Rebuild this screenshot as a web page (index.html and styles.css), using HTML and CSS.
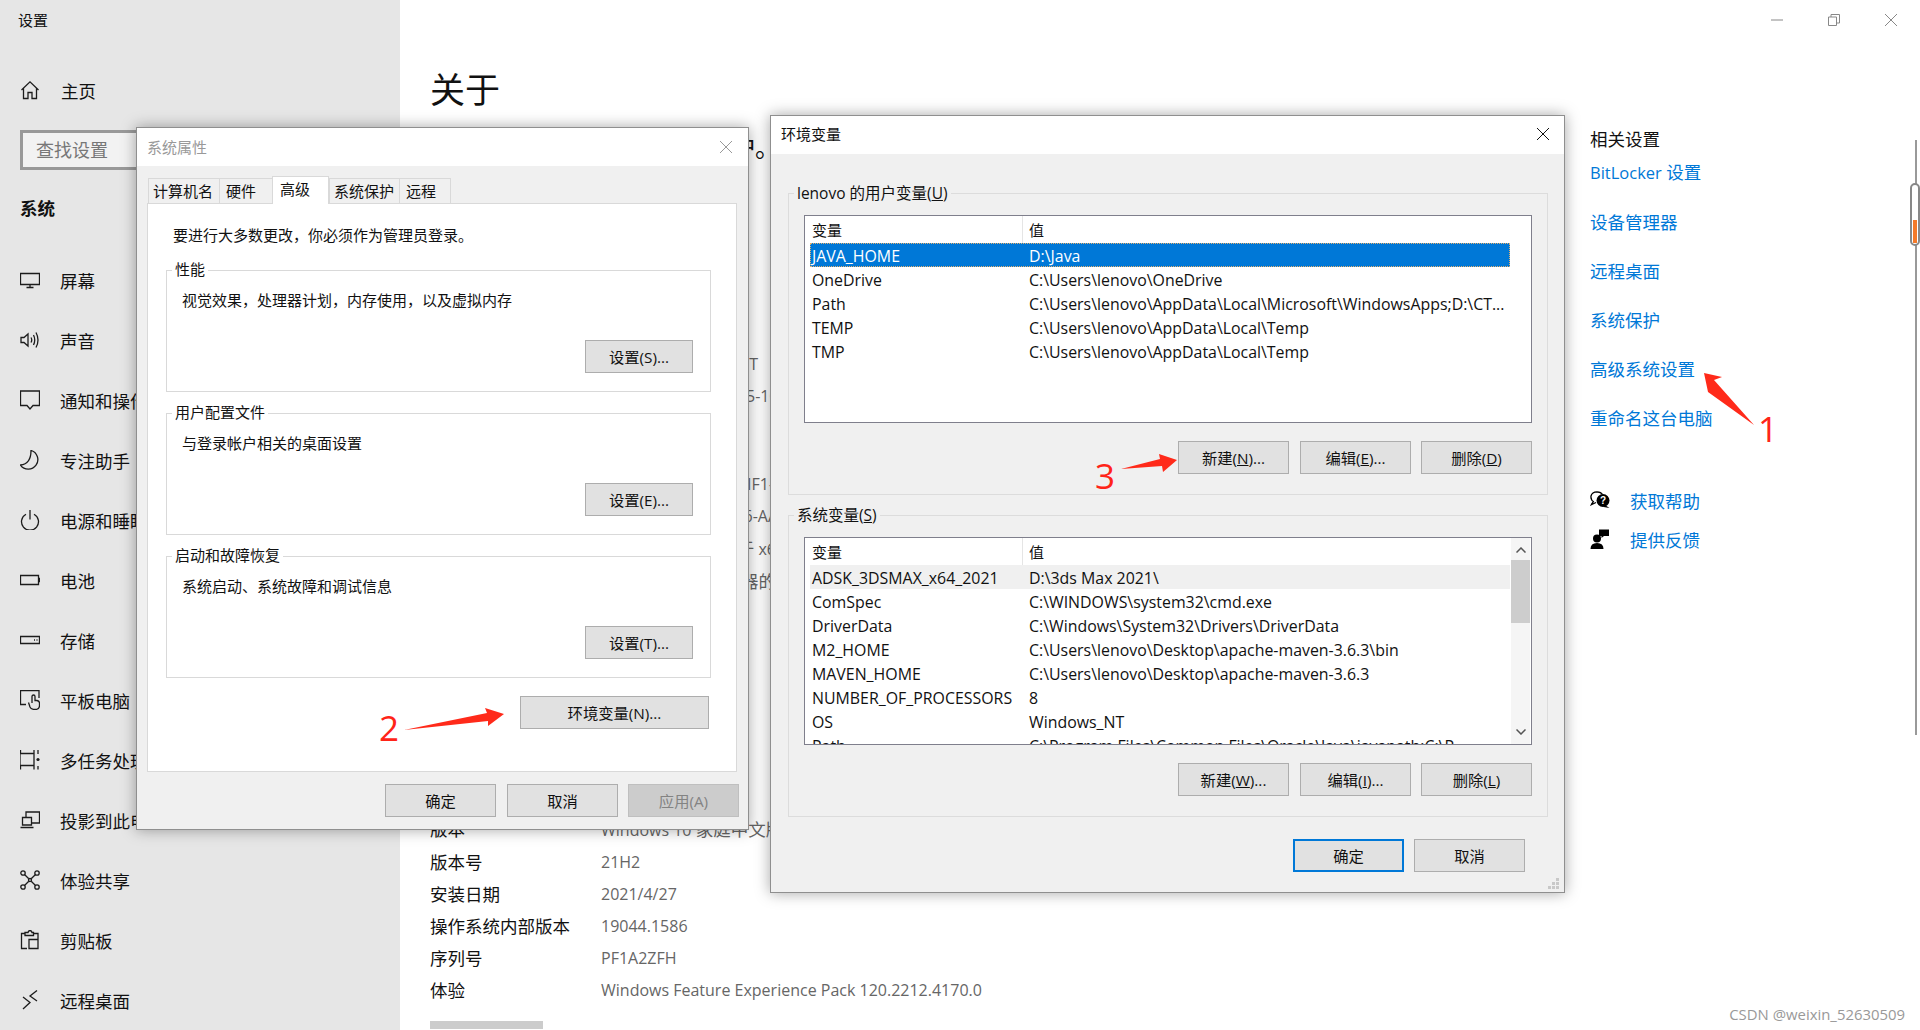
FILE: index.html
```html
<!DOCTYPE html>
<html lang="zh-CN">
<head>
<meta charset="utf-8">
<title>设置</title>
<link rel="stylesheet" href="styles.css">
</head>
<body>
<div class="settings">
  <aside class="sidebar">
    <div class="app-title">设置</div>
    <div class="nav-item home">
      <svg class="ico" viewBox="0 0 20 20"><path d="M1.5 10 10 1.8 18.500 10M3.500 8.200V18.500H8V12.500H12V18.500H16.500V8.200"/></svg>
      <span>主页</span>
    </div>
    <div class="search">查找设置</div>
    <div class="section">系统</div>
    <nav class="nav">
      <div class="nav-item"><svg class="ico" viewBox="0 0 20 20"><path d="M.5 3.500H19.500V14.500H.5ZM10 14.500V17.500M6.500 17.500H13.500"/></svg><span>屏幕</span></div>
      <div class="nav-item"><svg class="ico" viewBox="0 0 20 20"><path d="M1 7.500H4L8 4V16L4 12.500H1ZM11 7.500Q12.500 10 11 12.500M13.500 5Q16 10 13.500 15M16 2.500Q20 10 16 17.500"/></svg><span>声音</span></div>
      <div class="nav-item"><svg class="ico" viewBox="0 0 20 20"><path d="M.5 1H19.500V15.500H13L10 19 7 15.500H.5Z"/></svg><span>通知和操作</span></div>
      <div class="nav-item"><svg class="ico" viewBox="0 0 20 20"><path d="M11 .5A9.500 9.500 0 1 1 .5 15Q11 14 11 .5Z"/></svg><span>专注助手</span></div>
      <div class="nav-item"><svg class="ico" viewBox="0 0 20 20"><path d="M6 4.200A8.500 8.500 0 1 0 14 4.200M10 0V9.500"/></svg><span>电源和睡眠</span></div>
      <div class="nav-item"><svg class="ico" viewBox="0 0 20 20"><path d="M.5 5.500H18.500V14.500H.5ZM18.500 8.500H19.500V11.500H18.500"/></svg><span>电池</span></div>
      <div class="nav-item"><svg class="ico" viewBox="0 0 20 20"><path d="M.5 6.500H19.500V13.500H.5ZM14 10H15M16.500 10H17.500"/></svg><span>存储</span></div>
      <div class="nav-item"><svg class="ico" viewBox="0 0 20 20"><path d="M6 14.500H.5V.5H19V8M12 13V6.500Q12 5 13.500 5 15 5 15 6.500V10.500H17Q19.500 11 19.500 13V15.500Q19.500 19.500 15 19.500 11 19.500 10 17L8.500 12.500"/></svg><span>平板电脑</span></div>
      <div class="nav-item"><svg class="ico" viewBox="0 0 20 20"><path d="M.5 0V3.500H14V0M.5 19.500V15.500H14V19.500M0 15.500V3.500M14 15.500V3.500M.5 15.500H14M18 0V4M18 16V19.500"/><circle class="fill" cx="18" cy="9.500" r="1.600"/></svg><span>多任务处理</span></div>
      <div class="nav-item"><svg class="ico" viewBox="0 0 20 20"><path d="M6 7V2H19.500V13H12M2.500 7.500H11.500V15H2.500ZM.5 17.500H13.500"/></svg><span>投影到此电脑</span></div>
      <div class="nav-item"><svg class="ico" viewBox="0 0 20 20"><circle cx="3" cy="3" r="2.200"/><circle cx="17" cy="3" r="2.200"/><circle cx="3" cy="17" r="2.200"/><circle cx="17" cy="17" r="2.200"/><circle cx="10" cy="10" r="1.500"/><path d="M4.500 4.500 8.800 8.800M15.500 4.500 11.200 8.800M4.500 15.500 8.800 11.200M15.500 15.500 11.200 11.200"/></svg><span>体验共享</span></div>
      <div class="nav-item"><svg class="ico" viewBox="0 0 20 20"><path d="M7 18.500H1.500V3.500H5M13 3.500H18V18.500H9V9.500H18M5 5.500V2.500H8Q8.500 .5 10 .5 11.500 .5 12 2.500H13.500V5.500Z"/></svg><span>剪贴板</span></div>
      <div class="nav-item"><svg class="ico" viewBox="0 0 20 20"><path d="M3 7 10 12.500 3 19M17 .5 10 6 17 11"/></svg><span>远程桌面</span></div>
    </nav>
  </aside>

  <main class="main">
    <h1 class="page-title">关于</h1>
    <p class="lead">你的电脑受到监视并受到保护。</p>
    <div class="specs">
      <div class="spec"><span class="spec-k">设备名称</span><span class="spec-v">LAPTOP-K2ABBQFXIT</span></div>
      <div class="spec"><span class="spec-k">处理器</span><span class="spec-v wrap">Intel(R) Core(TM)&nbsp;&nbsp;&nbsp;&nbsp;i5-10300H CPU @ 2.50GHz 2.50 GHz</span></div>
      <div class="spec"><span class="spec-k">机带 RAM</span><span class="spec-v">16.0 GB</span></div>
      <div class="spec"><span class="spec-k">设备 ID</span><span class="spec-v">9D5C13AB-4C77-B7IF1-4E0</span></div>
      <div class="spec"><span class="spec-k">产品 ID</span><span class="spec-v">00342-30000-0000&nbsp;6-AAOEM</span></div>
      <div class="spec"><span class="spec-k">系统类型</span><span class="spec-v">64 <span class="cjk">位操作系统</span>, <span class="cjk">基于</span> x64 <span class="cjk">的处理器</span></span></div>
      <div class="spec"><span class="spec-k">笔和触控</span><span class="spec-v"><span class="cjk">没有可用于此显示器的笔或触控输入</span></span></div>
    </div>
    <div class="specs lower">
      <div class="spec"><span class="spec-k">版本</span><span class="spec-v">Windows 10 <span class="cjk">家庭中文版</span></span></div>
      <div class="spec"><span class="spec-k">版本号</span><span class="spec-v">21H2</span></div>
      <div class="spec"><span class="spec-k">安装日期</span><span class="spec-v">2021/4/27</span></div>
      <div class="spec"><span class="spec-k">操作系统内部版本</span><span class="spec-v">19044.1586</span></div>
      <div class="spec"><span class="spec-k">序列号</span><span class="spec-v">PF1A2ZFH</span></div>
      <div class="spec"><span class="spec-k">体验</span><span class="spec-v">Windows Feature Experience Pack 120.2212.4170.0</span></div>
    </div>
    <div class="copy-btn"></div>
  </main>

  <aside class="related">
    <div class="win-controls">
      <svg viewBox="0 0 12 12"><path d="M0 6H12"/></svg>
      <svg viewBox="0 0 12 12"><path d="M.5 3H8.500V11.500H.5ZM3 3V.5H11.500V9H8.500"/></svg>
      <svg viewBox="0 0 12 12"><path d="M0 0 12 12M12 0 0 12"/></svg>
    </div>
    <div class="related-title">相关设置</div>
    <a class="link first"><span class="latin">BitLocker</span> 设置</a>
    <a class="link">设备管理器</a>
    <a class="link">远程桌面</a>
    <a class="link">系统保护</a>
    <a class="link">高级系统设置</a>
    <a class="link">重命名这台电脑</a>
    <div class="help">
      <svg class="help-ico" viewBox="0 0 20 18"><path class="line" d="M4 11Q.5 9 1 5 2 .8 7 .8 11 1 12.500 3.500M3.500 10 1.500 13.500 6 11.500"/><circle cx="13" cy="9.500" r="6.500"/><path d="M15 14 19.500 17 13.500 16Z"/><text class="q" x="13" y="13" text-anchor="middle">?</text></svg>
      <a class="link-plain">获取帮助</a>
    </div>
    <div class="help second">
      <svg class="help-ico" viewBox="0 0 20 20"><circle cx="7" cy="9.500" r="4"/><path d="M.5 20Q.5 14 7 14 13.500 14 13.500 20ZM9 .5H19V7H14L11.500 9V7H9Z"/></svg>
      <a class="link-plain">提供反馈</a>
    </div>
  </aside>
</div>

<div class="outer-scroll"><div class="outer-thumb"><div class="outer-mark"></div></div></div>

<section class="dialog props">
  <header class="dlg-title muted"><span>系统属性</span>
    <svg class="dlg-x" viewBox="0 0 12 12"><path d="M0 0 12 12M12 0 0 12"/></svg></header>
  <div class="tabs">
    <div class="tab">计算机名</div>
    <div class="tab">硬件</div>
    <div class="tab active">高级</div>
    <div class="tab">系统保护</div>
    <div class="tab">远程</div>
  </div>
  <div class="tab-panel">
    <p class="note">要进行大多数更改，你必须作为管理员登录。</p>
    <div class="group">
      <div class="legend">性能</div>
      <p class="desc">视觉效果，处理器计划，内存使用，以及虚拟内存</p>
      <button class="btn">设置(S)...</button>
    </div>
    <div class="group">
      <div class="legend">用户配置文件</div>
      <p class="desc">与登录帐户相关的桌面设置</p>
      <button class="btn">设置(E)...</button>
    </div>
    <div class="group">
      <div class="legend">启动和故障恢复</div>
      <p class="desc">系统启动、系统故障和调试信息</p>
      <button class="btn">设置(T)...</button>
    </div>
    <button class="btn env">环境变量(N)...</button>
  </div>
  <footer class="dlg-actions">
    <button class="btn">确定</button>
    <button class="btn">取消</button>
    <button class="btn disabled">应用(A)</button>
  </footer>
</section>

<section class="dialog envvars">
  <header class="dlg-title raised"><span>环境变量</span>
    <svg class="dlg-x dark" viewBox="0 0 12 12"><path d="M0 0 12 12M12 0 0 12"/></svg></header>
  <div class="ev-body">
    <div class="ev-group">
      <div class="ev-legend">lenovo 的用户变量(<u>U</u>)</div>
      <div class="listview">
        <div class="lv-main">
          <div class="lv-head"><span class="c1">变量</span><span class="c2">值</span></div>
          <div class="lv-row selected"><span class="c1">JAVA_HOME</span><span class="c2">D:\Java</span></div>
          <div class="lv-row"><span class="c1">OneDrive</span><span class="c2">C:\Users\lenovo\OneDrive</span></div>
          <div class="lv-row"><span class="c1">Path</span><span class="c2">C:\Users\lenovo\AppData\Local\Microsoft\WindowsApps;D:\CT...</span></div>
          <div class="lv-row"><span class="c1">TEMP</span><span class="c2">C:\Users\lenovo\AppData\Local\Temp</span></div>
          <div class="lv-row"><span class="c1">TMP</span><span class="c2">C:\Users\lenovo\AppData\Local\Temp</span></div>
        </div>
      </div>
      <div class="ev-buttons">
        <button class="btn">新建(<u>N</u>)...</button>
        <button class="btn">编辑(<u>E</u>)...</button>
        <button class="btn">删除(<u>D</u>)</button>
      </div>
    </div>
    <div class="ev-group">
      <div class="ev-legend">系统变量(<u>S</u>)</div>
      <div class="listview">
        <div class="lv-main">
          <div class="lv-head"><span class="c1">变量</span><span class="c2">值</span></div>
          <div class="lv-row hot"><span class="c1">ADSK_3DSMAX_x64_2021</span><span class="c2">D:\3ds Max 2021\</span></div>
          <div class="lv-row"><span class="c1">ComSpec</span><span class="c2">C:\WINDOWS\system32\cmd.exe</span></div>
          <div class="lv-row"><span class="c1">DriverData</span><span class="c2">C:\Windows\System32\Drivers\DriverData</span></div>
          <div class="lv-row"><span class="c1">M2_HOME</span><span class="c2">C:\Users\lenovo\Desktop\apache-maven-3.6.3\bin</span></div>
          <div class="lv-row"><span class="c1">MAVEN_HOME</span><span class="c2">C:\Users\lenovo\Desktop\apache-maven-3.6.3</span></div>
          <div class="lv-row"><span class="c1">NUMBER_OF_PROCESSORS</span><span class="c2">8</span></div>
          <div class="lv-row"><span class="c1">OS</span><span class="c2">Windows_NT</span></div>
          <div class="lv-row"><span class="c1">Path</span><span class="c2">C:\Program Files\Common Files\Oracle\Java\javapath;C:\P...</span></div>
        </div>
        <div class="lv-scroll">
          <svg viewBox="0 0 10 6"><path d="M.5 5.500 5 1 9.500 5.500"/></svg>
          <div class="lv-thumb"></div>
          <svg viewBox="0 0 10 6"><path d="M.5 .5 5 5 9.500 .5"/></svg>
        </div>
      </div>
      <div class="ev-buttons">
        <button class="btn">新建(<u>W</u>)...</button>
        <button class="btn">编辑(<u>I</u>)...</button>
        <button class="btn">删除(<u>L</u>)</button>
      </div>
    </div>
  </div>
  <footer class="ev-actions">
    <button class="btn primary">确定</button>
    <button class="btn">取消</button>
  </footer>
  <svg class="grip" viewBox="0 0 12 12"><path d="M8 0h3v3H8zM4 4h3v3H4zM8 4h3v3H8zM0 8h3v3H0zM4 8h3v3H4zM8 8h3v3H8z"/></svg>
</section>

<svg class="arrows" viewBox="0 0 1920 1030">
  <polygon points="1704,373 1722,377 1714,380 1754,425 1708,392"/>
  <polygon points="404,730 487,713 485,708 504,714 488,726 488,721"/>
  <polygon points="1121,469 1160,459 1159,454 1177,460 1163,472 1162,466"/>
</svg>
<span class="num n1">1</span>
<span class="num n2">2</span>
<span class="num n3">3</span>
<div class="watermark">CSDN @weixin_52630509</div>
</body>
</html>
```
FILE: styles.css
```css
* { box-sizing: border-box; }
html, body { margin: 0; height: 100%; overflow: hidden; }
body {
  width: 1920px; height: 1030px; position: relative; background: #fff; color: #111;
  font-family: "Open Sans", "Noto Sans CJK SC", sans-serif;
}
p, h1 { margin: 0; }

.settings { display: flex; height: 1030px; }

/* sidebar */
.sidebar { width: 400px; flex: none; background: #e6e6e6; padding-left: 20px; overflow: hidden; }
.app-title { font-size: 15px; line-height: 20px; margin: 10px 0 0 -2px; }
.nav-item { display: flex; align-items: center; height: 60px; gap: 20px; font-size: 17.500px; white-space: nowrap; }
.nav-item.home { height: 40px; margin-top: 40px; gap: 21px; }
.ico { width: 20px; height: 20px; flex: none; fill: none; stroke: #1c1c1c; stroke-width: 1.300; }
.ico .fill { fill: #1c1c1c; stroke: none; }
.search {
  width: 300px; height: 40px; margin-top: 20px; background: #f2f2f2; border: 3px solid #999;
  padding-left: 13px; line-height: 34px; font-size: 18px; color: #777;
}
.section { font-size: 17.500px; font-weight: 700; line-height: 24px; margin-top: 26px; }
.nav { margin-top: 30px; }

/* main */
.main { width: 1190px; flex: none; padding: 65px 0 0 30px; position: relative; overflow: hidden; }
.page-title { font-size: 35px; font-weight: 400; line-height: 50px; }
.lead { font-size: 25px; line-height: 36px; margin-top: 14px; white-space: nowrap; }
.specs { margin-top: 187px; }
.specs.lower { margin-top: 223px; }
.spec { display: flex; font-size: 17.500px; line-height: 24px; margin-bottom: 8px; }
.spec-k { width: 171px; flex: none; }
.spec-v { color: #666; white-space: nowrap; font-size: 16px; }
.spec-v.wrap { white-space: normal; width: 300px; }
.cjk { font-size: 17.500px; }
.copy-btn { width: 113px; height: 8px; background: #ccc; margin-top: 19px; }

/* related */
.related { flex: 1; position: relative; font-size: 17.500px; }
.win-controls { display: flex; height: 127px; padding: 14px 0 0 181px; gap: 45px; align-items: flex-start; }
.win-controls svg { width: 12px; height: 12px; fill: none; stroke: #888; stroke-width: 1; flex: none; }
.related-title { line-height: 24px; }
.link { display: block; color: #0078d7; line-height: 24px; margin-top: 25px; }
.link.first { margin-top: 9px; }
.latin { font-size: 16.500px; }
.help { display: flex; align-items: center; height: 24px; margin-top: 58px; gap: 20px; color: #0078d7; }
.help.second { margin-top: 15px; }
.help-ico { width: 20px; height: 20px; flex: none; fill: #000; }
.help-ico .line { fill: none; stroke: #000; stroke-width: 1.300; }
.help-ico .q { fill: #fff; font-size: 10px; font-weight: 700; font-family: "Liberation Sans", sans-serif; }

.outer-scroll { position: absolute; left: 1915px; top: 140px; width: 2px; height: 595px; background: #999; }
.outer-thumb { position: absolute; left: -5px; top: 43px; width: 10px; height: 63px; background: #fff; border: 2px solid #888; border-radius: 5px; }
.outer-mark { position: absolute; left: 1px; top: 35px; width: 4px; height: 23px; background: #f47a2a; }

/* dialogs */
.dialog {
  position: absolute; background: #f0f0f0; border: 1px solid #8f8f8f;
  box-shadow: 0 0 14px rgba(0, 0, 0, .35); font-size: 15px; display: flex; flex-direction: column;
}
.props { left: 136px; top: 127px; width: 613px; height: 703px; }
.envvars { left: 770px; top: 115px; width: 795px; height: 778px; }
.dlg-title {
  height: 38px; flex: none; background: #fff; display: flex; align-items: center; justify-content: space-between;
  padding: 0 15px 0 10px; line-height: 20px;
}
.dlg-title.raised { padding-bottom: 2px; }
.dlg-title.muted { color: #999; padding-right: 16px; }
.dlg-x { width: 12px; height: 12px; fill: none; stroke: #999; stroke-width: 1; }
.dlg-x.dark { stroke: #111; }

.tabs { display: flex; align-items: flex-end; height: 37px; padding-left: 11px; }
.tab {
  height: 25px; padding: 0 6px; line-height: 24px; border: 1px solid #d9d9d9; border-bottom: 0; border-right: 0;
  margin-top: 12px; white-space: nowrap;
}
.tab:nth-child(2) { width: 53px; }
.tab:nth-child(3) { width: 57px; }
.tab:nth-child(4) { width: 70px; padding: 0 4px; }
.tab:nth-child(5) { width: 52px; border-right: 1px solid #d9d9d9; }
.tab:first-child { width: 71px; padding: 0 4px; }
.tab.active {
  height: 28px; background: #fff; border-right: 1px solid #d9d9d9; margin-bottom: -1px; padding: 0 7px;
  line-height: 24px; position: relative;
}
.tab-panel {
  margin: 0 11px 0 10px; height: 569px; background: #fff; border: 1px solid #d9d9d9; padding: 0 0 0 18px;
  display: flex; flex-direction: column; flex: none;
}
.note { line-height: 20px; margin: 21px 0 25px 7px; }
.group {
  width: 545px; height: 122px; border: 1px solid #d9d9d9; margin-bottom: 21px; padding: 0 17px 0 15px;
  display: flex; flex-direction: column; flex: none;
}
.legend { width: fit-content; background: #fff; padding: 0 3px; margin: -12px 0 2px -10px; line-height: 20px; height: 20px; }
.desc { line-height: 20px; margin-top: 9px; }
.btn {
  display: block; width: 111px; height: 33px; flex: none; padding: 0 0 2px; background: #e1e1e1; border: 1px solid #adadad;
  border-radius: 0; font: inherit; font-size: 15.300px; color: #111; text-align: center;
}
.group .btn { width: 108px; align-self: flex-end; margin-top: 30px; }
.btn.env { width: 189px; align-self: flex-end; margin: -3px 27px 0 0; }
.btn.disabled { background: #ccc; border-color: #bfbfbf; color: #838383; }
.btn.primary { border: 2px solid #0078d7; }
.dlg-actions { display: flex; justify-content: flex-end; gap: 11px; padding: 12px 9px 0 0; }
.dlg-actions .btn:last-child { margin-left: -1px; }

.ev-body { padding: 39px 16px 0 17px; }
.ev-group { height: 302px; border: 1px solid #dcdcdc; padding: 0 15px 0 15px; margin-bottom: 20px; }
.ev-legend { width: fit-content; height: 20px; line-height: 20px; background: #f0f0f0; padding: 0 3px; margin: -11px 0 1px -10px; white-space: nowrap; font-size: 15.500px; }
.listview { height: 208px; margin-top: 12px; background: #fff; border: 1px solid #7f7f8c; display: flex; overflow: hidden; padding: 0 0 0 5px; }
.lv-main { width: 700px; flex: none; }
.lv-head { display: flex; height: 27px; align-items: center; }
.lv-head .c1 { border-right: 1px solid #e5e5e5; height: 100%; line-height: 29px; }
.lv-head .c2 { line-height: 29px; height: 100%; }
.lv-row { display: flex; height: 24px; align-items: center; white-space: nowrap; font-size: 15.900px; padding-top: 1px; }
.c1 { width: 213px; flex: none; padding-left: 2px; }
.c2 { flex: 1; padding-left: 6px; }
.lv-row.selected { background: #0078d7; color: #fff; outline: 1px dotted #e3b070; outline-offset: -1px; }
.lv-row.hot { background: #f0f0f0; }
.lv-scroll { width: 19px; flex: none; margin-left: 1px; display: flex; flex-direction: column; align-items: center; background: #f5f5f5; padding-top: 9px; }
.lv-scroll svg { width: 10px; height: 6px; fill: none; stroke: #555; stroke-width: 1.500; flex: none; }
.lv-thumb { width: 19px; height: 63px; background: #cdcdcd; margin: 7px 0 106px; flex: none; }
.ev-buttons { display: flex; justify-content: flex-end; gap: 11px; margin-top: 18px; padding-right: 0; }
.ev-buttons .btn:last-child { margin-left: -1px; }
.ev-actions { display: flex; justify-content: flex-end; gap: 10px; padding: 2px 39px 0 0; }
.grip { position: absolute; right: 4px; bottom: 2px; width: 12px; height: 12px; fill: #c8c8c8; }

/* annotations */
.arrows { position: absolute; left: 0; top: 0; width: 1920px; height: 1030px; pointer-events: none; }
.arrows polygon { fill: #ff2a1a; }
.num { position: absolute; color: #ff2418; font-size: 35px; line-height: 40px; }
.n1 { left: 1758px; top: 409px; }
.n2 { left: 379px; top: 708px; }
.n3 { left: 1095px; top: 456px; }
.watermark { position: absolute; right: 15px; bottom: 6px; font-size: 14.900px; line-height: 20px; color: #999; }
```
